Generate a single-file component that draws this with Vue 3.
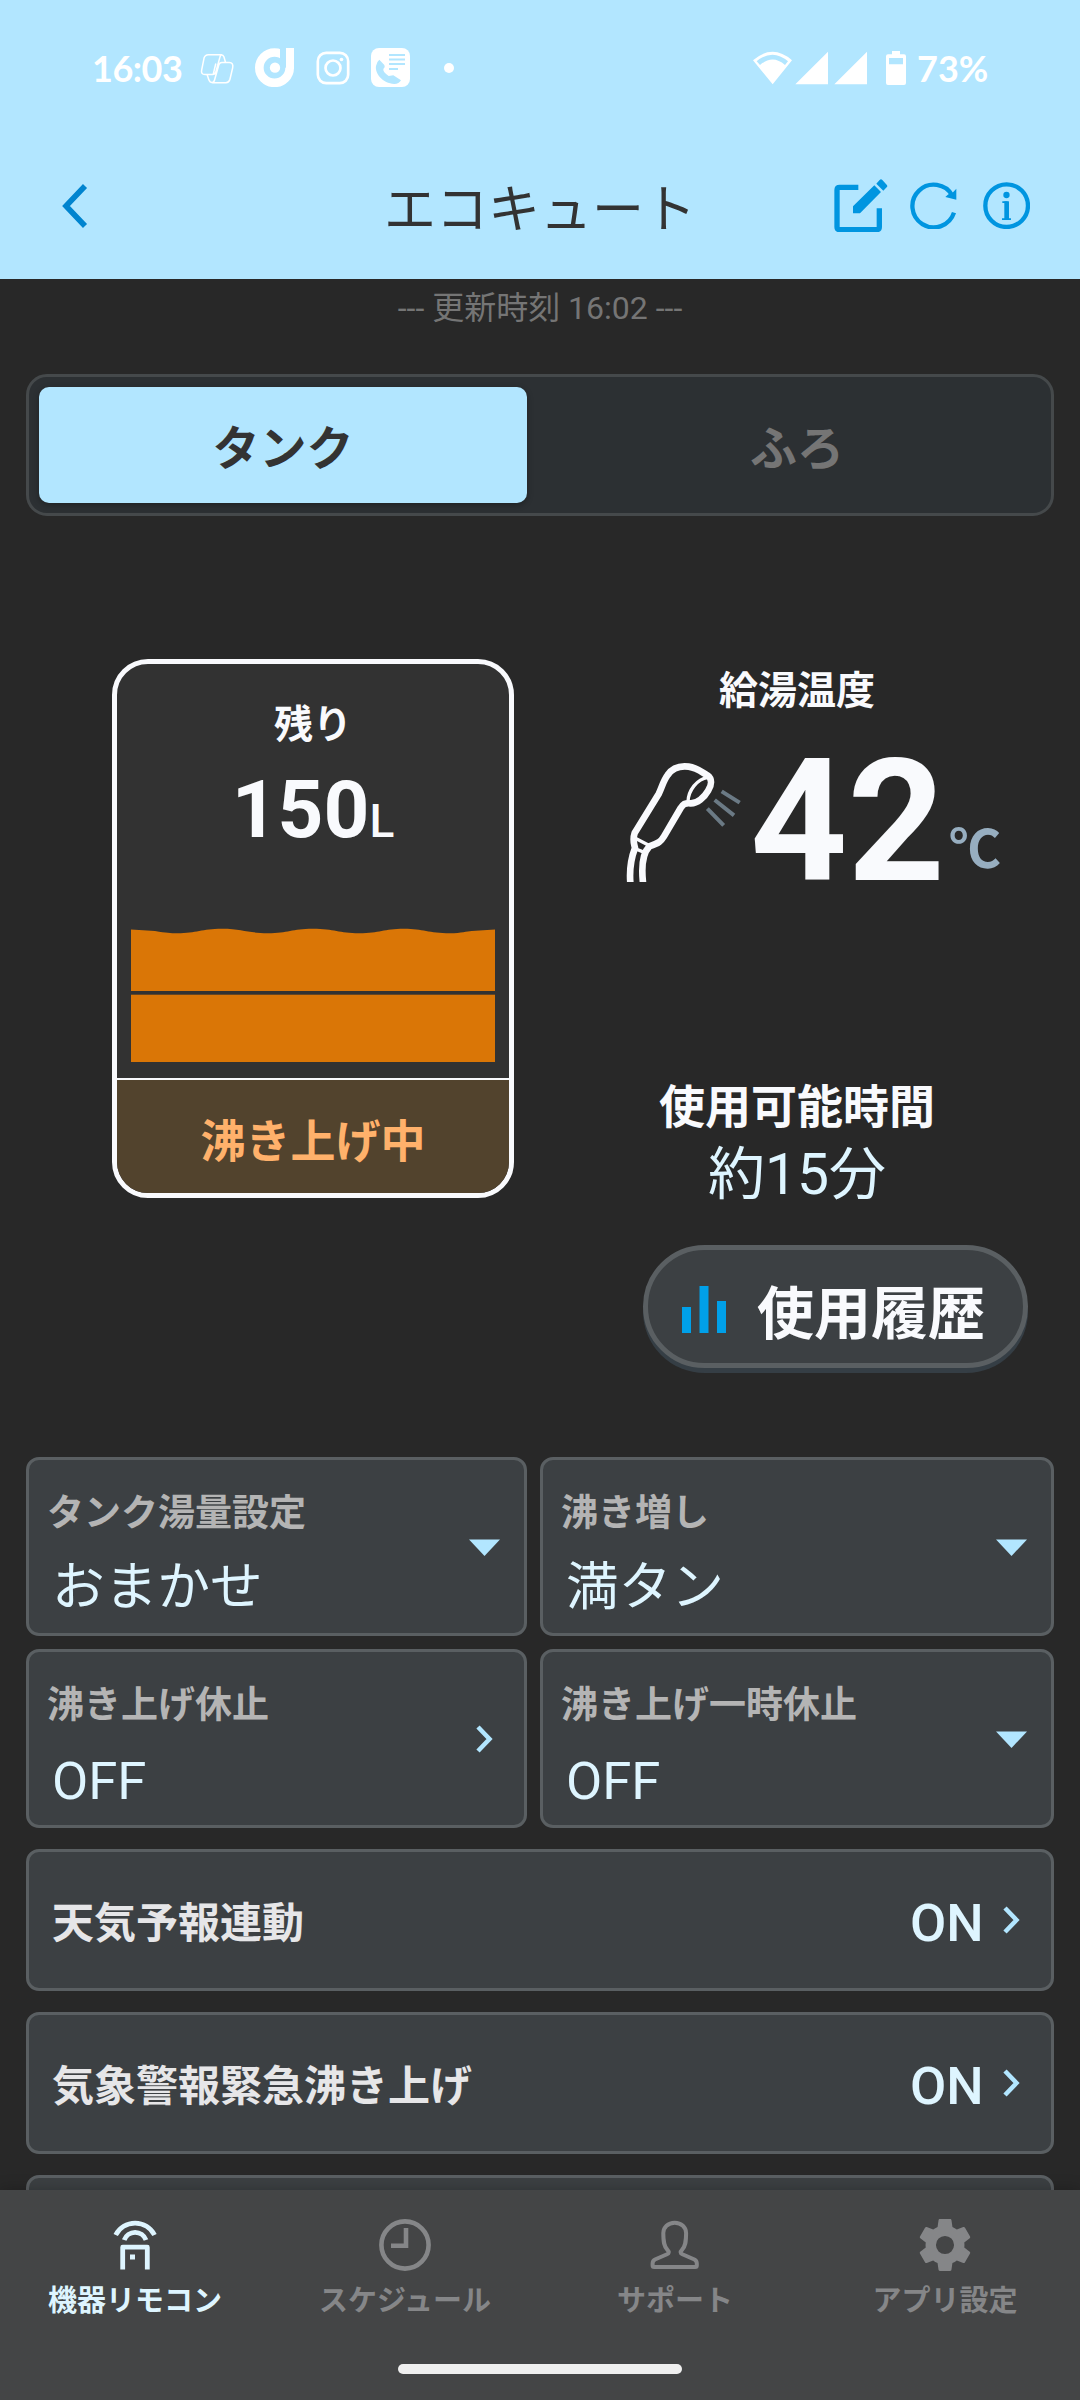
<script setup>
const settings = [
  { label: 'タンク湯量設定', value: 'おまかせ', icon: 'drop' },
  { label: '沸き増し', value: '満タン', icon: 'drop' },
  { label: '沸き上げ休止', value: 'OFF', icon: 'next', latin: true },
  { label: '沸き上げ一時休止', value: 'OFF', icon: 'drop', latin: true }
]
const rows = [
  { label: '天気予報連動', value: 'ON' },
  { label: '気象警報緊急沸き上げ', value: 'ON' },
  { label: '', value: '' }
]
</script>

<template>
  <div class="screen">
    <div class="status">
      <div class="status-left">
        <span class="clock">16:03</span>
        <svg class="copilot" width="34" height="31" viewBox="421 99 101 92" fill="none" stroke="#fff" stroke-width="4.5" stroke-linejoin="round">
          <path d="M446 104H484Q490 104 492 110L497 127M446 104Q436 104 433 114L426 149Q423 163 436 163H458Q466 163 468 155L480 112Q482 104 486 104M442 163L447 178Q450 187 458 187H498Q507 187 510 177L518 143Q521 127 508 127H486Q479 127 477 134L464 180Q462 187 456 187M468 130L460 163" />
        </svg>
        <svg class="dmark" width="39" height="39" viewBox="585 84 117 117">
          <circle cx="643.5" cy="143" r="45.5" fill="none" stroke="#fff" stroke-width="26" />
          <rect x="660" y="84" width="18" height="59" fill="#b2e6ff" />
          <rect x="678" y="84" width="24" height="62" fill="#fff" />
          <circle cx="645" cy="143" r="15.5" fill="#fff" />
        </svg>
        <svg class="insta" width="34" height="34" viewBox="768 93 102 102" fill="none" stroke="#fff">
          <rect x="773.5" y="98.5" width="91" height="91" rx="25" stroke-width="8" />
          <circle cx="819" cy="144" r="22.5" stroke-width="8" />
          <circle cx="844.5" cy="118.5" r="5.5" fill="#fff" stroke="none" />
        </svg>
        <svg class="call" width="39" height="39" viewBox="933 84 117 117">
          <rect x="933" y="84" width="117" height="117" rx="24" fill="#fff" />
          <path d="M958 119L973 135Q977 141 970 147Q968 156 986 168L1000 166L1023 181Q1017 192 1003 192C968 190 944 160 948 138Q950 125 958 119Z" fill="#b2e6ff" />
          <path d="M987 105H1035M987 118.5H1035M987 132H1035M987 147H1014" stroke="#b2e6ff" stroke-width="6" />
        </svg>
        <span class="dot"></span>
      </div>
      <div class="status-right">
        <svg width="115" height="34" viewBox="69 89 345 102" fill="#fff">
          <path d="M69 117Q128 66 186 117L128 189ZM80 120L90 131Q128 98 165 131L174 120Q128 80 80 120Z" fill-rule="evenodd" />
          <path d="M196 189L294 91V189ZM313 189L411 91V189Z" />
        </svg>
        <svg class="battery" width="20" height="34" viewBox="468 87 60 102" fill="#fff">
          <path d="M486 87H510V97H522Q528 97 528 103V183Q528 189 522 189H474Q468 189 468 183V103Q468 97 474 97H486ZM477 108V127H519V108Z" fill-rule="evenodd" />
        </svg>
        <span class="percent">73%</span>
      </div>
    </div>

    <header class="header">
      <svg class="back" width="26" height="44" viewBox="0 0 26 44" fill="none" stroke="#0084cf" stroke-width="5.6">
        <path d="M23 2L4 22L23 42" />
      </svg>
      <h1>エコキュート</h1>
      <div class="actions">
        <svg width="54" height="53.3" viewBox="101 86 162 160" fill="#0095e0">
          <path d="M174 111H118Q110 111 110 119V230Q110 238 118 238H229Q237 238 237 230V174" fill="none" stroke="#0095e0" stroke-width="16" />
          <path d="M158 189V168L222 105L242 125L179 189ZM228 100L238 89Q242 85 246 89L259 103Q263 107 259 111L249 121Z" />
        </svg>
        <svg class="refresh" width="46.7" height="47.3" viewBox="329 95 140 142">
          <path d="M461 187A64 64 0 1 1 456 136" fill="none" stroke="#0095e0" stroke-width="13" />
          <path d="M468 115V148L435 140L444 132L453 131Z" fill="#0095e0" />
        </svg>
        <svg class="info" width="47.3" height="47.3" viewBox="549 95 142 142">
          <circle cx="620" cy="166" r="64" fill="none" stroke="#0095e0" stroke-width="13" />
          <circle cx="619.5" cy="134" r="9.5" fill="#0095e0" />
          <path d="M607 155.5H623M606 206.5H633M620.5 153V208" fill="none" stroke="#0095e0" stroke-width="5" />
          <rect x="613" y="153" width="14" height="55" fill="#0095e0" />
        </svg>
      </div>
    </header>

    <main class="content">
      <p class="updated">--- 更新時刻 16:02 ---</p>

      <div class="tabs">
        <div class="tab active">タンク</div>
        <div class="tab">ふろ</div>
      </div>

      <section class="summary">
        <div class="tank">
          <div class="tank-body">
            <p class="remain">残り</p>
            <p class="amount">150<small>L</small></p>
            <svg class="water" width="364" height="134.5" viewBox="123 777 1092 363" preserveAspectRatio="none" fill="#da7606">
              <path d="M123 781L195 785C230 790 240 791 262 791C320 791 335 779 395 779C460 779 470 791 534 791C595 791 605 779 668 779C735 779 745 791 808 791C870 791 880 779 942 779C1000 779 1015 791 1080 791C1115 791 1130 786 1145 785L1215 781V947H123Z" />
              <rect x="123" y="957" width="1092" height="183" />
            </svg>
          </div>
          <div class="tank-state">沸き上げ中</div>
        </div>

        <div class="side">
          <p class="temp-label">給湯温度</p>
          <div class="temp">
            <svg width="115" height="119" viewBox="78 339 345 357" fill="none" stroke="#f9fafd" stroke-width="20" stroke-linejoin="round">
              <path d="M91 698C88 660 92 628 105 594C102 580 97 570 104 549L176 432C186 411 190 392 203 375C218 353 242 347 266 350C290 353 305 366 322 376C337 386 335 405 325 421C313 442 292 461 271 460C254 459 250 462 242 474L192 559C183 574 177 579 148 589C128 610 124 652 129 698" />
              <path d="M324 382C291 387 265 421 264 455" stroke-width="10" />
              <path d="M106 565L152 589M108 597L133 607" stroke-width="10" />
              <path d="M365 424L419 458M344 450L402 496M322 476L371 526" stroke="#6b7a85" stroke-width="12" />
            </svg>
            <span class="degrees">42</span>
            <span class="unit">℃</span>
          </div>
          <p class="time-label">使用可能時間</p>
          <p class="time">約15分</p>
          <div class="history">
            <svg width="44" height="47" viewBox="0 0 44 47" fill="#00a0e9">
              <path d="M0 21H9V47H0ZM17.5 0H26.5V47H17.5ZM35 15H44V47H35Z" />
            </svg>
            <span>使用履歴</span>
          </div>
        </div>
      </section>

      <section class="cards">
        <div v-for="item in settings" :key="item.label" class="card">
          <div class="card-text">
            <p class="card-label">{{ item.label }}</p>
            <p class="card-value" :class="{ latin: item.latin }">{{ item.value }}</p>
          </div>
          <svg v-if="item.icon === 'drop'" class="drop" width="31" height="17" viewBox="0 0 31 17">
            <path d="M0 .5H31L15.5 17Z" fill="#b2e6ff" />
          </svg>
          <svg v-else class="next" width="17" height="28" viewBox="0 0 17 28" fill="none" stroke="#b2e6ff" stroke-width="4.5">
            <path d="M2 2L13.5 14L2 26" />
          </svg>
        </div>
      </section>

      <section class="rows">
        <div v-for="(row, i) in rows" :key="i" class="row">
          <span class="row-label">{{ row.label }}</span>
          <span class="row-value">{{ row.value }}</span>
          <svg class="next" width="17" height="28" viewBox="0 0 17 28" fill="none" stroke="#b2e6ff" stroke-width="4.5">
            <path d="M2 2L13.5 14L2 26" />
          </svg>
        </div>
      </section>
    </main>

    <nav class="nav">
      <div class="items">
        <div class="item current">
          <svg width="54" height="54" viewBox="108 2218 54 54" fill="none" stroke="currentColor" stroke-width="4.8">
            <path d="M115.7 2235A21.8 21.8 0 0 1 154.5 2235M124.2 2240A11.6 11.6 0 0 1 146 2240" />
            <path d="M122.7 2269.5V2247.2H147.3V2269.5" stroke-linejoin="round" />
            <rect x="130" y="2254.5" width="5" height="5" fill="currentColor" stroke="none" />
          </svg>
          <span>機器リモコン</span>
        </div>
        <div class="item">
          <svg width="54" height="54" viewBox="378 2218 54 54" fill="none" stroke="currentColor" stroke-width="4.6">
            <circle cx="405" cy="2245" r="23.6" />
            <path d="M406 2228V2245.7H391" />
          </svg>
          <span>スケジュール</span>
        </div>
        <div class="item">
          <svg width="54" height="54" viewBox="648 2218 54 54" fill="none" stroke="currentColor" stroke-width="4">
            <path d="M674.7 2222.7C668 2222.7 663.3 2227.5 663.3 2233C663.3 2242 664 2246.500 667.500 2250Q670.200 2252.700 667 2254.300L655 2259.500Q652.600 2260.700 652.600 2263.500V2265.500Q652.600 2267 654.200 2267H695.200Q696.800 2267 696.800 2265.500V2263.500Q696.800 2260.700 694.400 2259.500L682.400 2254.300Q679.200 2252.700 681.900 2250C685.400 2246.500 686.100 2242 686.100 2233C686.100 2227.500 681.400 2222.700 674.700 2222.700Z" />
          </svg>
          <span>サポート</span>
        </div>
        <div class="item">
          <svg width="54" height="54" viewBox="2 2 20 20" fill="currentColor" fill-rule="evenodd">
            <path d="M19.14,12.94c0.04-0.3,0.06-0.61,0.06-0.94c0-0.32-0.02-0.64-0.07-0.94l2.03-1.58c0.18-0.14,0.23-0.41,0.12-0.61l-1.92-3.32c-0.12-0.22-0.37-0.29-0.59-0.22l-2.39,0.96c-0.5-0.38-1.03-0.7-1.62-0.94L14.4,2.81c-0.04-0.24-0.24-0.41-0.48-0.41h-3.84c-0.24,0-0.43,0.17-0.47,0.41L9.25,5.35C8.66,5.59,8.12,5.92,7.63,6.29L5.24,5.33c-0.22-0.08-0.47,0-0.59,0.22L2.74,8.87C2.62,9.08,2.66,9.34,2.86,9.48l2.03,1.58C4.84,11.36,4.8,11.69,4.8,12s0.02,0.64,0.07,0.94l-2.03,1.58c-0.18,0.14-0.23,0.41-0.12,0.61l1.92,3.32c0.12,0.22,0.37,0.29,0.59,0.22l2.39-0.96c0.5,0.38,1.03,0.7,1.62,0.94l0.36,2.54c0.05,0.24,0.24,0.41,0.48,0.41h3.84c0.24,0,0.44-0.17,0.47-0.41l0.36-2.54c0.59-0.24,1.13-0.56,1.62-0.94l2.39,0.96c0.22,0.08,0.47,0,0.59-0.22l1.92-3.32c0.12-0.22,0.07-0.47-0.12-0.61L19.14,12.94zM12 15.35a3.35 3.35 0 1 1 0-6.7a3.35 3.35 0 0 1 0 6.7z" />
          </svg>
          <span>アプリ設定</span>
        </div>
      </div>
      <div class="home"></div>
    </nav>
  </div>
</template>

<style>
body {
  margin: 0;
  background: #282828;
}
</style>

<style scoped>
.screen {
  display: flex;
  flex-direction: column;
  width: 1080px;
  height: 2400px;
  overflow: hidden;
  background: #282828;
  color: #f9fafd;
  font-family: Roboto, "Noto Sans CJK JP", sans-serif;
}
.screen * {
  box-sizing: border-box;
}
p,
h1 {
  margin: 0;
}
svg {
  display: block;
  flex: none;
}
.status {
  display: flex;
  justify-content: space-between;
  flex: none;
  height: 132px;
  padding: 3px 92px 0 92px;
  background: #b2e6ff;
  color: #fff;
}
.status-left,
.status-right {
  display: flex;
  align-items: center;
  height: 129px;
}
.clock,
.percent {
  font: 700 36px/40px Lato, sans-serif;
  white-space: nowrap;
}
.clock {
  width: 108px;
  letter-spacing: -.5px;
}
.copilot {
  margin-top: 1px;
}
.dmark {
  margin-left: 21px;
}
.insta {
  margin-left: 22px;
}
.call {
  margin-left: 21px;
}
.dot {
  width: 10px;
  height: 10px;
  margin-left: 34px;
  border-radius: 50%;
  background: #fff;
}
.battery {
  margin-left: 18px;
}
.percent {
  width: 71px;
  margin-left: 11px;
}
.header {
  display: grid;
  grid-template-columns: 384px 312px 1fr;
  align-items: center;
  flex: none;
  height: 147px;
  background: #b2e6ff;
}
.back {
  margin-left: 62px;
}
h1 {
  margin-top: 10px;
  color: #333;
  font-size: 52px;
  font-weight: 400;
  line-height: 70px;
  white-space: nowrap;
}
.actions {
  display: flex;
  align-items: center;
  padding-left: 138px;
}
.refresh {
  margin-left: 22px;
}
.info {
  margin-left: 26px;
}
.content {
  flex: 1;
  min-height: 0;
  overflow: hidden;
}
.updated {
  height: 59px;
  margin-bottom: 36px;
  color: #757575;
  font-size: 32px;
  line-height: 59px;
  text-align: center;
}
.tabs {
  display: flex;
  height: 142px;
  margin: 0 26px;
  padding: 10px;
  border: 3px solid #45494b;
  border-radius: 21px;
  background: #2c3033;
}
.tab {
  flex: 1;
  padding: 4px 0 0 26px;
  color: #757575;
  font-size: 47px;
  font-weight: 700;
  line-height: 116px;
  text-align: center;
}
.tab.active {
  flex: none;
  width: 488px;
  padding-left: 0;
  border-radius: 10px;
  background: #b2e6ff;
  box-shadow: 0 2px 6px rgba(0, 0, 0, .3);
  color: #333;
}
.summary {
  display: flex;
  height: 800px;
  margin-top: 141px;
  padding-left: 112px;
}
.tank {
  display: flex;
  flex-direction: column;
  width: 402px;
  height: 539px;
  margin-top: 2px;
  overflow: hidden;
  border: 5px solid #f9fafd;
  border-radius: 36px;
  background: #323232;
}
.tank-body {
  display: flex;
  flex-direction: column;
  align-items: center;
  flex: none;
  height: 414px;
  padding-top: 36px;
}
.remain {
  font-size: 39px;
  font-weight: 700;
  line-height: 50px;
}
.amount {
  margin-top: 20px;
  font-size: 80px;
  font-weight: 700;
  line-height: 80px;
}
.amount small {
  font-size: 46px;
  font-weight: 500;
}
.water {
  margin: auto 0 16px;
}
.tank-state {
  flex: 1;
  padding-top: 13px;
  border-top: 2px solid #f9fafd;
  background: #52432d;
  color: #ffb16b;
  font-size: 45px;
  font-weight: 700;
  line-height: 100px;
  text-align: center;
}
.side {
  width: 454px;
  margin-left: 86px;
}
.temp-label,
.time-label,
.time {
  width: 394px;
  text-align: center;
}
.temp-label {
  height: 70px;
  font-size: 39px;
  font-weight: 700;
  line-height: 68px;
}
.temp {
  display: flex;
  align-items: flex-end;
  height: 120px;
  margin: 35px 0 195px;
  padding-left: 26px;
}
.degrees {
  margin-left: 9px;
  font-size: 170px;
  font-weight: 700;
  line-height: 120px;
}
.unit {
  margin-left: 4px;
  color: #97aec0;
  font-size: 52px;
  font-weight: 700;
  line-height: 62px;
}
.time-label {
  font-size: 46px;
  font-weight: 700;
  line-height: 60px;
}
.time {
  color: #def5ff;
  font-size: 57px;
  line-height: 76px;
}
.history {
  display: flex;
  align-items: center;
  width: 385px;
  height: 123px;
  margin: 32px 0 0 43px;
  padding-left: 34px;
  border: 5px solid #5a5f62;
  border-radius: 62px;
  background: #3c4043;
  box-shadow: 0 5px 0 #353e45;
  font-size: 57px;
  font-weight: 700;
}
.history svg {
  margin-top: 6px;
}
.history span {
  margin: 17px 0 0 31px;
  line-height: 70px;
}
.cards {
  display: grid;
  grid-template-columns: 501px 514px;
  grid-auto-rows: 179px;
  gap: 13px;
  margin: 0 26px;
}
.card,
.row {
  display: flex;
  align-items: center;
  border: 3px solid #5a5f62;
  border-radius: 13px;
  background: #3c4043;
}
.card-text {
  flex: 1;
  align-self: flex-start;
  padding: 30px 0 0 18px;
}
.card-label {
  color: #b4b4b4;
  font-size: 37px;
  font-weight: 700;
  line-height: 48px;
}
.card-value {
  margin-top: 19px;
  padding-left: 5px;
  color: #def5ff;
  font-size: 52.7px;
  line-height: 60px;
}
.card-value.latin {
  margin-top: 21px;
}
.drop {
  margin: 1px 24px 0 0;
}
.next {
  margin-right: 31px;
}
.rows {
  display: flex;
  flex-direction: column;
  gap: 21px;
  margin: 21px 26px 0;
}
.row {
  flex: none;
  height: 142px;
  padding-left: 23px;
}
.row-label {
  flex: 1;
  padding-top: 8px;
  color: #e6e6e8;
  font-size: 42px;
  font-weight: 700;
  line-height: 60px;
}
.row-value {
  width: 93px;
  padding-top: 5px;
  color: #def5ff;
  font-size: 52.7px;
  font-weight: 500;
  line-height: 60px;
}
.nav {
  display: flex;
  flex-direction: column;
  align-items: center;
  flex: none;
  height: 210px;
  background: #444546;
  box-shadow: 0 0 14px rgba(0, 0, 0, .25);
  color: #858688;
}
.items {
  display: grid;
  grid-template-columns: repeat(4, 270px);
  height: 174px;
}
.item {
  display: flex;
  flex-direction: column;
  align-items: center;
  padding-top: 28px;
  font-size: 29px;
  font-weight: 700;
  line-height: 40px;
}
.item span {
  margin-top: 9px;
}
.item.current {
  color: #def5ff;
}
.home {
  width: 284px;
  height: 10px;
  border-radius: 5px;
  background: #efefef;
}
</style>
